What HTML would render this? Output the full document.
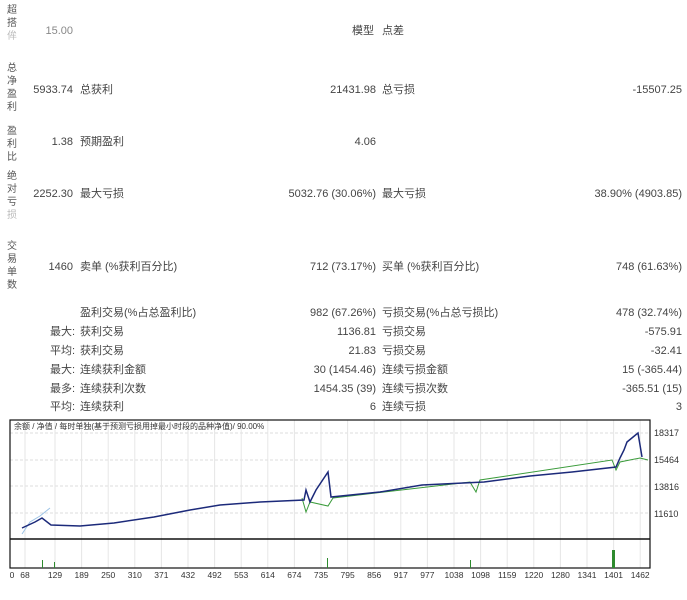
<!DOCTYPE html>
<html><head><meta charset="utf-8"><style>
body{margin:0;width:687px;height:600px;background:#fff;font-family:"Liberation Sans","Noto Sans CJK SC",sans-serif;font-size:11px;color:#444;position:relative;overflow:hidden}
.t{position:absolute;white-space:nowrap;line-height:13px}
.r{text-align:right}
.v{position:absolute;left:7px;width:12px;font-size:10px;line-height:13px;color:#555}
</style></head><body>
<div class="v" style="top:4px">超<br>搭<br><span style="color:#bbb">侔</span></div>
<div class="v" style="top:62px">总<br>净<br>盈<br>利</div>
<div class="v" style="top:125px">盈<br>利<br>比</div>
<div class="v" style="top:170px">绝<br>对<br>亏<br><span style="color:#bbb">损</span></div>
<div class="v" style="top:240px">交<br>易<br>单<br>数</div>

<div class="t r" style="right:614px;top:25px;color:#888">15.00</div>
<div class="t r" style="right:313px;top:25px">模型</div><div class="t" style="left:382px;top:25px">点差</div>

<div class="t r" style="right:614px;top:84px">5933.74</div><div class="t" style="left:80px;top:84px">总获利</div>
<div class="t r" style="right:311px;top:84px">21431.98</div><div class="t" style="left:382px;top:84px">总亏损</div>
<div class="t r" style="right:5px;top:84px">-15507.25</div>

<div class="t r" style="right:614px;top:136px">1.38</div><div class="t" style="left:80px;top:136px">预期盈利</div>
<div class="t r" style="right:311px;top:136px">4.06</div>

<div class="t r" style="right:614px;top:188px">2252.30</div><div class="t" style="left:80px;top:188px">最大亏损</div>
<div class="t r" style="right:311px;top:188px">5032.76 (30.06%)</div><div class="t" style="left:382px;top:188px">最大亏损</div>
<div class="t r" style="right:5px;top:188px">38.90% (4903.85)</div>

<div class="t r" style="right:614px;top:261px">1460</div><div class="t" style="left:80px;top:261px">卖单 (%获利百分比)</div>
<div class="t r" style="right:311px;top:261px">712 (73.17%)</div><div class="t" style="left:382px;top:261px">买单 (%获利百分比)</div>
<div class="t r" style="right:5px;top:261px">748 (61.63%)</div>

<div class="t" style="left:80px;top:307px">盈利交易(%占总盈利比)</div>
<div class="t r" style="right:311px;top:307px">982 (67.26%)</div><div class="t" style="left:382px;top:307px">亏损交易(%占总亏损比)</div>
<div class="t r" style="right:5px;top:307px">478 (32.74%)</div>

<div class="t" style="left:50px;top:326px">最大:</div><div class="t" style="left:80px;top:326px">获利交易</div>
<div class="t r" style="right:311px;top:326px">1136.81</div><div class="t" style="left:382px;top:326px">亏损交易</div>
<div class="t r" style="right:5px;top:326px">-575.91</div>

<div class="t" style="left:50px;top:345px">平均:</div><div class="t" style="left:80px;top:345px">获利交易</div>
<div class="t r" style="right:311px;top:345px">21.83</div><div class="t" style="left:382px;top:345px">亏损交易</div>
<div class="t r" style="right:5px;top:345px">-32.41</div>

<div class="t" style="left:50px;top:364px">最大:</div><div class="t" style="left:80px;top:364px">连续获利金额</div>
<div class="t r" style="right:311px;top:364px">30 (1454.46)</div><div class="t" style="left:382px;top:364px">连续亏损金额</div>
<div class="t r" style="right:5px;top:364px">15 (-365.44)</div>

<div class="t" style="left:50px;top:383px">最多:</div><div class="t" style="left:80px;top:383px">连续获利次数</div>
<div class="t r" style="right:311px;top:383px">1454.35 (39)</div><div class="t" style="left:382px;top:383px">连续亏损次数</div>
<div class="t r" style="right:5px;top:383px">-365.51 (15)</div>

<div class="t" style="left:50px;top:401px">平均:</div><div class="t" style="left:80px;top:401px">连续获利</div>
<div class="t r" style="right:311px;top:401px">6</div><div class="t" style="left:382px;top:401px">连续亏损</div>
<div class="t r" style="right:5px;top:401px">3</div>

<svg style="position:absolute;left:0;top:410px" width="687" height="190" xmlns="http://www.w3.org/2000/svg">
<g stroke="#ddd" stroke-width="1" stroke-dasharray="3,2">
<line x1="10" y1="23" x2="650" y2="23"/><line x1="10" y1="50" x2="650" y2="50"/><line x1="10" y1="76" x2="650" y2="76"/><line x1="10" y1="103" x2="650" y2="103"/>
</g>
<g stroke="#e6e6e6" stroke-width="1">
<line x1="25" y1="10" x2="25" y2="158"/><line x1="55" y1="10" x2="55" y2="158"/><line x1="81.6" y1="10" x2="81.6" y2="158"/><line x1="108.2" y1="10" x2="108.2" y2="158"/><line x1="134.8" y1="10" x2="134.8" y2="158"/><line x1="161.4" y1="10" x2="161.4" y2="158"/><line x1="188" y1="10" x2="188" y2="158"/><line x1="214.6" y1="10" x2="214.6" y2="158"/><line x1="241.2" y1="10" x2="241.2" y2="158"/><line x1="267.8" y1="10" x2="267.8" y2="158"/><line x1="294.4" y1="10" x2="294.4" y2="158"/><line x1="321" y1="10" x2="321" y2="158"/><line x1="347.6" y1="10" x2="347.6" y2="158"/><line x1="374.2" y1="10" x2="374.2" y2="158"/><line x1="400.8" y1="10" x2="400.8" y2="158"/><line x1="427.4" y1="10" x2="427.4" y2="158"/><line x1="454" y1="10" x2="454" y2="158"/><line x1="480.6" y1="10" x2="480.6" y2="158"/><line x1="507.2" y1="10" x2="507.2" y2="158"/><line x1="533.8" y1="10" x2="533.8" y2="158"/><line x1="560.4" y1="10" x2="560.4" y2="158"/><line x1="587" y1="10" x2="587" y2="158"/><line x1="613.6" y1="10" x2="613.6" y2="158"/><line x1="640.2" y1="10" x2="640.2" y2="158"/>
</g>
<rect x="10" y="10" width="640" height="148" fill="none" stroke="#111" stroke-width="1.2"/>
<line x1="10" y1="129" x2="650" y2="129" stroke="#111" stroke-width="1.5"/>
<polyline fill="none" stroke="#9cc3e6" stroke-width="1" points="22,124 30,112 40,106 50,98"/>
<polyline fill="none" stroke="#3a9b3a" stroke-width="1" points="302,88 306,102 310,92 328,96 333,88 470,72 476,82 480,70 612,50 616,60 620,52 640,48 648,50"/>
<polyline fill="none" stroke="#1c2a7a" stroke-width="1.5" points="22,118 35,112 42,108 51,115 80,116 114,113 154,107 190,100 220,95 260,92 304,90 306,80 310,92 316,80 328,62 331,87 380,82 422,75 484,72 530,66 572,62 616,57 620,48 624,40 627,32 638,23 642,47"/>
<g fill="#2e8b2e"><rect x="42" y="150" width="1" height="8"/><rect x="54" y="152" width="1" height="6"/><rect x="327" y="148" width="1" height="10"/><rect x="612" y="140" width="3" height="18"/><rect x="470" y="150" width="1" height="8"/></g>
<text x="14" y="19" font-size="8" fill="#333" font-family="Liberation Sans,Noto Sans CJK SC,sans-serif">余额 / 净值 / 每时单独(基于预测亏损用掉最小时段的品种净值)/ 90.00%</text>
<g font-size="9" fill="#333" font-family="Liberation Sans,sans-serif">
<text x="654" y="26">18317</text><text x="654" y="53">15464</text><text x="654" y="80">13816</text><text x="654" y="107">11610</text>
<g font-size="8.5" text-anchor="middle">
<text x="12" y="168">0</text><text x="25" y="168">68</text><text x="55" y="168">129</text><text x="81.6" y="168">189</text><text x="108.2" y="168">250</text><text x="134.8" y="168">310</text><text x="161.4" y="168">371</text><text x="188" y="168">432</text><text x="214.6" y="168">492</text><text x="241.2" y="168">553</text><text x="267.8" y="168">614</text><text x="294.4" y="168">674</text><text x="321" y="168">735</text><text x="347.6" y="168">795</text><text x="374.2" y="168">856</text><text x="400.8" y="168">917</text><text x="427.4" y="168">977</text><text x="454" y="168">1038</text><text x="480.6" y="168">1098</text><text x="507.2" y="168">1159</text><text x="533.8" y="168">1220</text><text x="560.4" y="168">1280</text><text x="587" y="168">1341</text><text x="613.6" y="168">1401</text><text x="640.2" y="168">1462</text>
</g></g>
</svg>
</body></html>
